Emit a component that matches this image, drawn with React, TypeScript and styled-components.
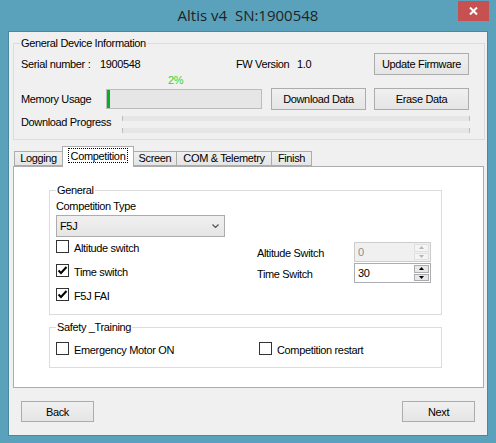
import styled, { createGlobalStyle } from 'styled-components'

const GlobalStyle = createGlobalStyle`
  html, body { margin: 0; padding: 0; }
  body {
    font-family: "Liberation Sans", Arial, sans-serif;
    font-size: 11px;
    letter-spacing: -0.35px;
    color: #000;
  }
  * { box-sizing: border-box; }
`

const Window = styled.div`
  width: 496px;
  height: 443px;
  background: #5aa2bc;
  display: flex;
  flex-direction: column;
`

const TitleBar = styled.div`
  height: 31px;
  display: grid;
  grid-template-columns: 1fr auto 1fr;
  align-items: start;
`

const Title = styled.div`
  grid-column: 2;
  font-family: "Open Sans", "Noto Sans", sans-serif;
  font-size: 15px;
  letter-spacing: 0;
  line-height: 31px;
  color: #222;
`

const CloseButton = styled.div`
  grid-column: 3;
  justify-self: end;
  margin: 1px 7px 0 0;
  width: 31px;
  height: 20px;
  background: #c75050;
  display: flex;
  align-items: center;
  justify-content: center;
`

const Client = styled.div`
  margin: 0 8px;
  height: 405px;
  background: #f0f0f0;
  border: 1px solid #4a88a0;
  display: flex;
  flex-direction: column;
`

const Group = styled.div<{ $w: number; $h: number; $bg?: string }>`
  position: relative;
  width: ${p => p.$w}px;
  height: ${p => p.$h}px;
  border: 1px solid #dcdcdc;
  background: ${p => p.$bg || 'transparent'};
`

const Legend = styled.span<{ $bg: string }>`
  position: absolute;
  top: -7px;
  left: 6px;
  padding: 0 1px;
  line-height: 13px;
  background: ${p => p.$bg};
`

const DeviceGroup = styled(Group)`
  margin: 11px 0 0 4px;
  padding: 9px 15px 0 7px;
  display: flex;
  flex-direction: column;
`

const Row = styled.div<{ $h?: number }>`
  display: flex;
  align-items: center;
  height: ${p => (p.$h ? `${p.$h}px` : 'auto')};
`

const Cell = styled.span<{ $w?: number }>`
  width: ${p => (p.$w ? `${p.$w}px` : 'auto')};
  flex: ${p => (p.$w ? 'none' : '1')};
  white-space: nowrap;
`

const Button = styled.button<{ $w?: number; $h?: number }>`
  width: ${p => p.$w || 95}px;
  height: ${p => p.$h || 22}px;
  flex: none;
  padding: 0;
  border: 1px solid #acacac;
  background: linear-gradient(#f0f0f0, #e5e5e5);
  font: inherit;
  letter-spacing: inherit;
  color: #000;
`

const Percent = styled.div`
  height: 13px;
  line-height: 10px;
  padding-left: 147px;
  color: #2fd62f;
  font-size: 11px;
`

const MemoryBar = styled.div`
  width: 156px;
  height: 20px;
  border: 1px solid #bcbcbc;
  background: #e6e6e6;
  margin-right: 9px;
`

const MemoryFill = styled.div`
  height: 100%;
  background: #06b025;
`

const ThinBars = styled.div`
  display: flex;
  flex-direction: column;
  gap: 7px;
  margin-top: 6px;
`

const ThinBar = styled.div`
  width: 348px;
  height: 5px;
  background: #e6e6e6;
  border-left: 1px solid #bcbcbc;
  border-right: 1px solid #bcbcbc;
`

const TabStrip = styled.div`
  display: flex;
  align-items: flex-end;
  height: 20px;
  margin: 6px 0 0 5px;
`

const Tab = styled.div<{ $w: number; $active?: boolean }>`
  position: relative;
  width: ${p => p.$w}px;
  height: ${p => (p.$active ? 21 : 15)}px;
  margin-bottom: ${p => (p.$active ? -1 : 0)}px;
  margin-left: -1px;
  z-index: ${p => (p.$active ? 1 : 0)};
  border: 1px solid #acacac;
  border-bottom: ${p => (p.$active ? 'none' : '1px solid #acacac')};
  background: ${p => (p.$active ? '#fff' : 'linear-gradient(#f0f0f0, #e5e5e5)')};
  display: flex;
  align-items: ${p => (p.$active ? 'flex-start' : 'center')};
  justify-content: center;
  line-height: 13px;
  white-space: nowrap;
  &:first-child { margin-left: 0; }
`

const FocusLabel = styled.span`
  margin-top: 1px;
  padding: 1px 2px 0;
  height: 15px;
  border: 1px dotted #000;
`

const TabPage = styled.div`
  margin-left: 4px;
  width: 471px;
  height: 222px;
  background: #fff;
  border: 1px solid #acacac;
  padding: 23px 0 0 35px;
  display: flex;
  flex-direction: column;
`

const GeneralGroup = styled(Group)`
  padding: 9px 0 0 6px;
`

const FieldLabel = styled.div`
  line-height: 13px;
`

const Combo = styled.div`
  margin-top: 2px;
  width: 169px;
  height: 22px;
  border: 1px solid #acacac;
  background: linear-gradient(#f0f0f0, #e5e5e5);
  display: flex;
  align-items: center;
  justify-content: space-between;
  padding: 0 5px 0 3px;
`

const Options = styled.div`
  display: grid;
  grid-template-columns: 201px 1fr;
`

const CheckColumn = styled.div`
  display: flex;
  flex-direction: column;
  gap: 9px;
  margin-top: 3px;
`

const CheckRow = styled.label<{ $w?: number }>`
  display: flex;
  align-items: flex-start;
  gap: 5px;
  width: ${p => (p.$w ? `${p.$w}px` : 'auto')};
  line-height: 13px;
  white-space: nowrap;
`

const Box = styled.span`
  width: 13px;
  height: 13px;
  flex: none;
  border: 1px solid #333;
  background: #fff;
  display: flex;
  align-items: center;
  justify-content: center;
`

const CheckText = styled.span`
  padding-top: 2px;
`

const SpinColumn = styled.div`
  display: flex;
  flex-direction: column;
  gap: 1px;
  margin-top: 5px;
`

const SpinRow = styled.div`
  display: flex;
  align-items: center;
  height: 20px;
`

const SpinLabel = styled.span`
  width: 97px;
  padding-top: 2px;
`

const Spin = styled.div<{ $disabled?: boolean }>`
  width: 77px;
  height: 20px;
  border: 1px solid ${p => (p.$disabled ? '#cccccc' : '#abadb3')};
  background: ${p => (p.$disabled ? '#f0f0f0' : '#fff')};
  color: ${p => (p.$disabled ? '#8c8c8c' : '#000')};
  display: flex;
  align-items: center;
  padding: 0 1px 0 3px;
`

const SpinValue = styled.span`
  flex: 1;
`

const SpinButtons = styled.div`
  width: 15px;
  height: 16px;
  display: flex;
  flex-direction: column;
  gap: 1px;
`

const SpinHalf = styled.div<{ $disabled?: boolean }>`
  flex: 1;
  border: 1px solid ${p => (p.$disabled ? '#e0e0e0' : '#acacac')};
  background: ${p => (p.$disabled ? '#f4f4f4' : '#e8e8e8')};
  display: flex;
  align-items: center;
  justify-content: center;
`

const SafetyGroup = styled(Group)`
  margin-top: 12px;
  padding: 14px 0 0 6px;
  display: flex;
`

const Footer = styled.div`
  display: flex;
  justify-content: space-between;
  padding: 13px 12px 0;
`

const Check = ({ checked }: { checked?: boolean }) => (
  <Box>
    {checked && (
      <svg width="11" height="11" viewBox="0 0 11 11">
        <path d="M1.5 5.5 L4 8 L9.5 2" fill="none" stroke="#000" strokeWidth="2" />
      </svg>
    )}
  </Box>
)

const Arrow = ({ up, color }: { up?: boolean; color: string }) => (
  <svg width="5" height="3" viewBox="0 0 5 3">
    <path d={up ? 'M0 3 L2.5 0 L5 3 Z' : 'M0 0 L2.5 3 L5 0 Z'} fill={color} />
  </svg>
)

const SpinBox = ({ value, disabled }: { value: string; disabled?: boolean }) => (
  <Spin $disabled={disabled}>
    <SpinValue>{value}</SpinValue>
    <SpinButtons>
      <SpinHalf $disabled={disabled}><Arrow up color={disabled ? '#b5b5b5' : '#000'} /></SpinHalf>
      <SpinHalf $disabled={disabled}><Arrow color={disabled ? '#b5b5b5' : '#000'} /></SpinHalf>
    </SpinButtons>
  </Spin>
)

const memory = 2

const App = () => {
  return (
    <Window>
      <GlobalStyle />
      <TitleBar>
        <Title>Altis v4&nbsp; SN:1900548</Title>
        <CloseButton>
          <svg width="9" height="8" viewBox="0 0 9 8">
            <path d="M1 0.5 L8 7.5 M8 0.5 L1 7.5" stroke="#fff" strokeWidth="2" />
          </svg>
        </CloseButton>
      </TitleBar>
      <Client>
        <DeviceGroup $w={472} $h={97}>
          <Legend $bg="#f0f0f0">General Device Information</Legend>
          <Row $h={22}>
            <Cell $w={79}>Serial number :</Cell>
            <Cell $w={136}>1900548</Cell>
            <Cell $w={61}>FW Version</Cell>
            <Cell>1.0</Cell>
            <Button>Update Firmware</Button>
          </Row>
          <Percent>{memory}%</Percent>
          <Row $h={22}>
            <Cell $w={85}>Memory Usage</Cell>
            <MemoryBar>
              <MemoryFill style={{ width: `${memory}%` }} />
            </MemoryBar>
            <Button>Download Data</Button>
            <Cell />
            <Button>Erase Data</Button>
          </Row>
          <Row>
            <Cell $w={101}>Download Progress</Cell>
            <ThinBars>
              <ThinBar />
              <ThinBar />
            </ThinBars>
          </Row>
        </DeviceGroup>

        <TabStrip>
          <Tab $w={49}>Logging</Tab>
          <Tab $w={72} $active>
            <FocusLabel>Competition</FocusLabel>
          </Tab>
          <Tab $w={44}>Screen</Tab>
          <Tab $w={96}>COM &amp; Telemetry</Tab>
          <Tab $w={41}>Finish</Tab>
        </TabStrip>
        <TabPage>
          <GeneralGroup $w={393} $h={125} $bg="#fff">
            <Legend $bg="#fff">General</Legend>
            <FieldLabel>Competition Type</FieldLabel>
            <Combo>
              <span>F5J</span>
              <svg width="7" height="4" viewBox="0 0 7 4">
                <path d="M0.5 0.5 L3.5 3.5 L6.5 0.5" fill="none" stroke="#555" strokeWidth="1.2" />
              </svg>
            </Combo>
            <Options>
              <CheckColumn>
                <CheckRow><Check /><CheckText>Altitude switch</CheckText></CheckRow>
                <CheckRow><Check checked /><CheckText>Time switch</CheckText></CheckRow>
                <CheckRow><Check checked /><CheckText>F5J FAI</CheckText></CheckRow>
              </CheckColumn>
              <SpinColumn>
                <SpinRow>
                  <SpinLabel>Altitude Switch</SpinLabel>
                  <SpinBox value="0" disabled />
                </SpinRow>
                <SpinRow>
                  <SpinLabel>Time Switch</SpinLabel>
                  <SpinBox value="30" />
                </SpinRow>
              </SpinColumn>
            </Options>
          </GeneralGroup>
          <SafetyGroup $w={393} $h={41} $bg="#fff">
            <Legend $bg="#fff">Safety _Training</Legend>
            <CheckRow $w={203}><Check /><CheckText>Emergency Motor ON</CheckText></CheckRow>
            <CheckRow><Check /><CheckText>Competition restart</CheckText></CheckRow>
          </SafetyGroup>
        </TabPage>

        <Footer>
          <Button $w={73} $h={21}>Back</Button>
          <Button $w={73} $h={21}>Next</Button>
        </Footer>
      </Client>
    </Window>
  )
}

export default App
